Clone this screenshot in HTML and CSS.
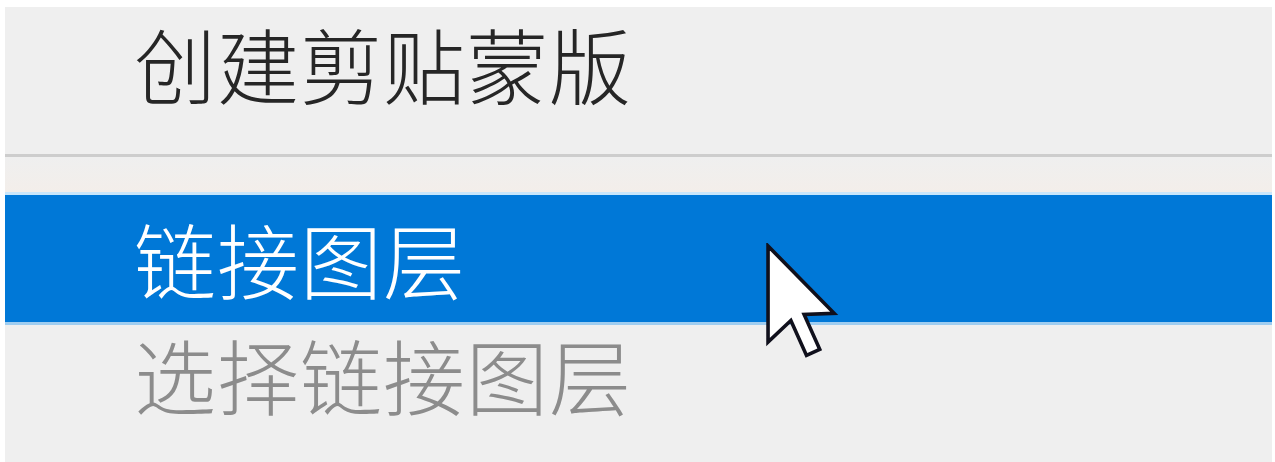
FILE: index.html
```html
<!DOCTYPE html>
<html lang="zh">
<head>
<meta charset="utf-8">
<title>菜单</title>
<link rel="stylesheet" href="styles.css">
</head>
<body>
<div class="menu">
  <div class="item item-first">创建剪贴蒙版</div>
  <div class="sep"></div>
  <div class="gap"></div>
  <div class="item item-active">链接图层</div>
  <div class="item item-disabled">选择链接图层</div>
</div>
<svg class="cursor" width="74" height="116" viewBox="-0.5 -0.5 12.3 19.3" xmlns="http://www.w3.org/2000/svg">
  <path d="M0 0 L0 16 L3.8 12.4 L6.4 18.2 L8.6 17.2 L6 11.4 L11 11.2 Z" fill="#ffffff" stroke="#10101c" stroke-width="0.6" stroke-linejoin="miter"/>
</svg>
</body>
</html>
```

FILE: styles.css
```css
html, body {
  margin: 0;
  padding: 0;
  background: #ffffff;
  width: 1275px;
  height: 462px;
  overflow: hidden;
}

.menu {
  margin: 7px 0 0 5px;
  width: 1267px;
  height: 455px;
  background: #efefef;
  display: flex;
  flex-direction: column;
  font-family: "Noto Sans CJK SC", "Noto Sans CJK JP", sans-serif;
  font-size: 82px;
  font-weight: 300;
  line-height: 82px;
  letter-spacing: 1px;
}

.item {
  padding-left: 129px;
  box-sizing: border-box;
}

.item-first {
  height: 147px;
  padding-top: 15px;
  color: #262626;
}

.sep {
  height: 3px;
  background: #cdcdcd;
  margin-bottom: 1px;
}

.gap {
  height: 34px;
  background: linear-gradient(#efefef, #f3eeea);
}

.item-active {
  height: 133px;
  padding-top: 22px;
  background: #0078d7;
  color: #ffffff;
  border-top: 3px solid #c9e6fb;
  border-bottom: 3px solid #9fcdf0;
}

.item-disabled {
  padding-top: 8px;
  color: #8c8c8c;
}

.cursor {
  position: absolute;
  left: 765px;
  top: 243px;
}
```
